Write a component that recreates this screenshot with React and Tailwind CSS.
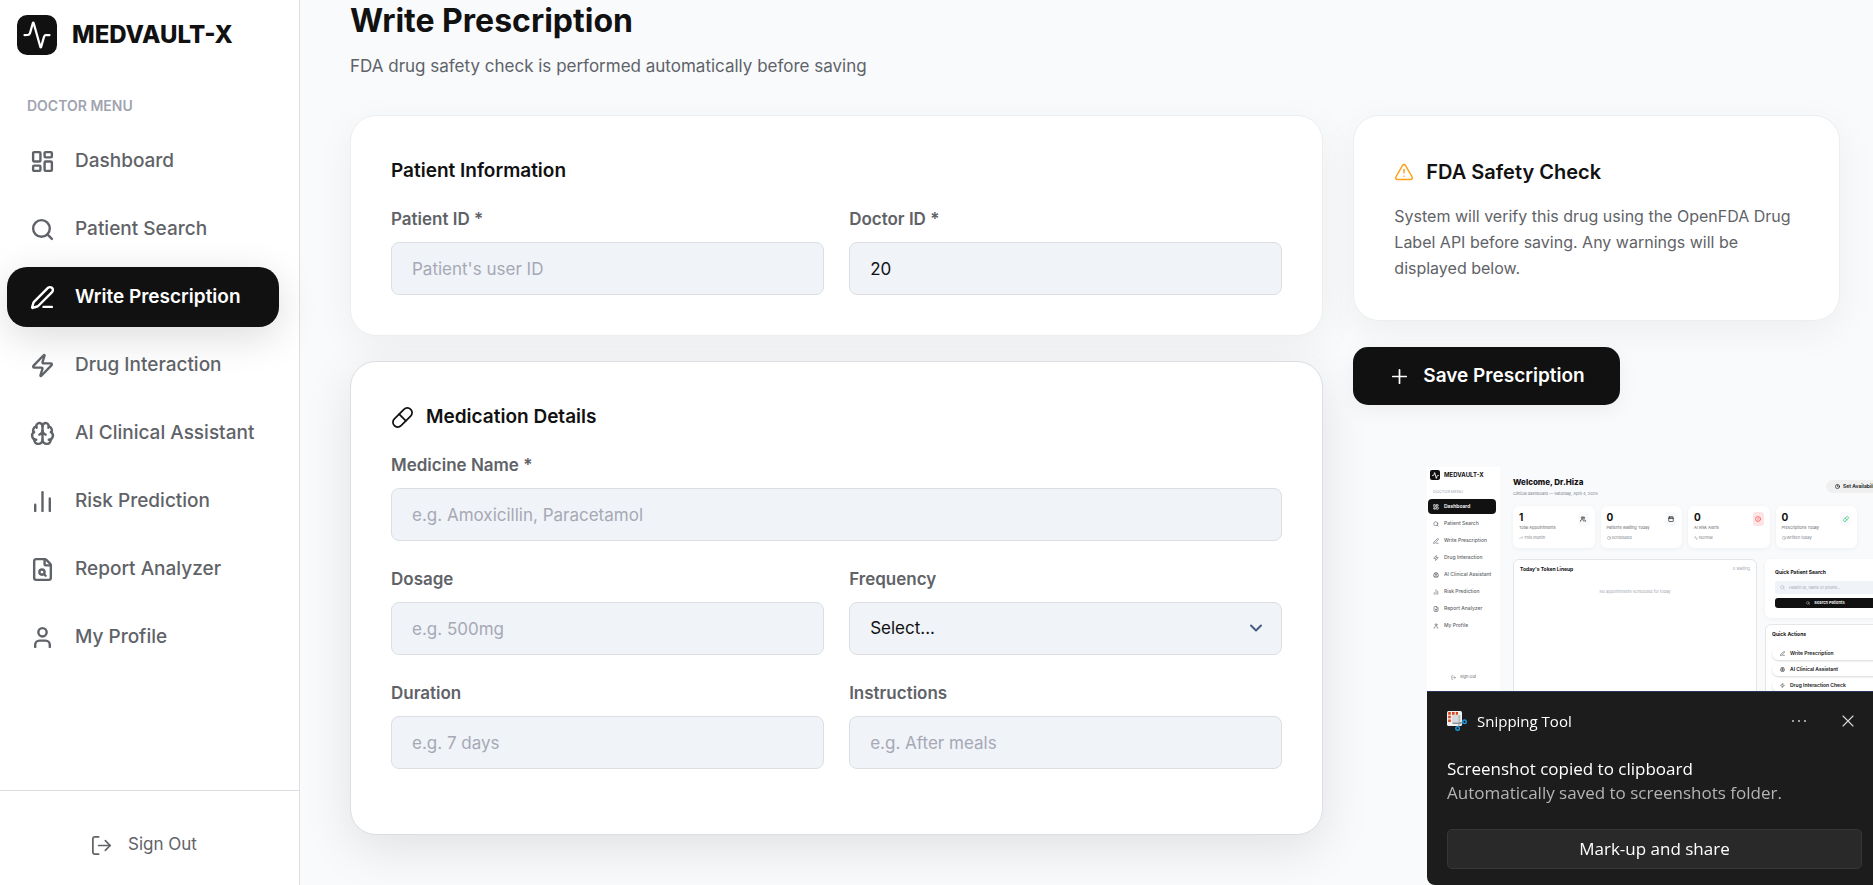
import React, { useState } from "react";
import {
  Activity,
  Brain,
  Calendar,
  ChartNoAxesColumn,
  ChevronDown,
  CircleAlert,
  Clock,
  FileSearch,
  LayoutDashboard,
  LogOut,
  PenLine,
  Pill,
  Plus,
  Search,
  TrendingUp,
  TriangleAlert,
  User,
  Users,
  X,
  Zap,
} from "lucide-react";

const navItems = [
  { label: "Dashboard", icon: LayoutDashboard },
  { label: "Patient Search", icon: Search },
  { label: "Write Prescription", icon: PenLine },
  { label: "Drug Interaction", icon: Zap },
  { label: "AI Clinical Assistant", icon: Brain },
  { label: "Risk Prediction", icon: ChartNoAxesColumn },
  { label: "Report Analyzer", icon: FileSearch },
  { label: "My Profile", icon: User },
];

const inputClass =
  "block w-full h-[53px] px-5 rounded-lg border border-[#dcdee1] bg-[#f0f3f8] text-[17px] text-[#111111] placeholder:text-[#a6a9b5] focus:outline-none";

const Sidebar = () => (
  <aside className="w-[300px] flex-shrink-0 flex flex-col bg-white border-r border-[#dcdee1]">
    <div className="flex items-center gap-[15px] pl-[17px] pt-[15px]">
      <div className="flex items-center justify-center w-10 h-10 rounded-[10px] bg-[#111111]">
        <Activity size={30} strokeWidth={1.8} className="text-white" />
      </div>
      <span className="text-2xl font-extrabold text-[#111111]">MEDVAULT-X</span>
    </div>

    <p className="mt-[41px] pl-[27px] text-sm font-semibold text-[#a0a4b0]">
      DOCTOR MENU
    </p>

    <nav className="mt-[15px] pl-[7px] pr-5 flex flex-col gap-2">
      {navItems.map(({ label, icon: Icon }) => {
        const active = label === "Write Prescription";
        return (
          <a
            key={label}
            href="#"
            className={`flex items-center h-[60px] gap-5 pl-[23px] rounded-[20px] text-[19px] ${
              active
                ? "bg-[#111111] text-white font-semibold shadow-[0_10px_40px_rgba(0,0,0,0.14)]"
                : "text-[#5f6368] font-medium"
            }`}
          >
            <Icon size={25} strokeWidth={2.3} />
            <span>{label}</span>
          </a>
        );
      })}
    </nav>

    <div className="mt-auto border-t border-[#dcdee1] h-[95px] flex justify-center pt-10 pr-3">
      <button className="flex items-center gap-[15px] h-7 text-[17px] text-[#5f6368]">
        <LogOut size={23} strokeWidth={1.8} />
        Sign Out
      </button>
    </div>
  </aside>
);

const Field = ({ id, label, children }) => (
  <div>
    <label htmlFor={id} className="block mb-[11px] text-[17px] leading-6 font-semibold text-[#5f6368]">
      {label}
    </label>
    {children}
  </div>
);

const previewStats = [
  { value: "1", label: "Total Appointments", note: "This month", noteIcon: TrendingUp, icon: Users, tile: "bg-[#f8fafc] text-[#111111]" },
  { value: "0", label: "Patients Waiting Today", note: "Scheduled", noteIcon: Clock, icon: Calendar, tile: "bg-[#f8fafc] text-[#111111]" },
  { value: "0", label: "AI Risk Alerts", note: "Normal", noteIcon: Activity, icon: CircleAlert, tile: "bg-[#fee4e4] text-[#ef4444]" },
  { value: "0", label: "Prescriptions Today", note: "Written today", noteIcon: Clock, icon: Pill, tile: "bg-[#f8fafc] text-[#22c55e]" },
];

const previewActions = [
  { label: "Write Prescription", icon: PenLine },
  { label: "AI Clinical Assistant", icon: Brain },
  { label: "Drug Interaction Check", icon: Zap },
];

// Thumbnail of the captured dashboard shown above the toast text
const CapturePreview = () => (
  <div className="h-[224px] overflow-hidden bg-[#f8fafc]">
    <div className="flex w-[459px] h-[224px]">
      <div className="w-[73px] flex-shrink-0 flex flex-col bg-white">
        <div className="flex items-center gap-1 pl-[3px] pt-[3px]">
          <div className="flex items-center justify-center w-[10px] h-[10px] rounded-[2px] bg-[#111111]">
            <Activity size={7} strokeWidth={3} className="text-white" />
          </div>
          <span className="text-[6px] leading-[10px] font-bold text-[#111111]">MEDVAULT-X</span>
        </div>
        <p className="mt-[9px] pl-[6px] text-[4px] leading-[6px] text-[#a0a4b0]">DOCTOR MENU</p>
        <div className="mt-1 pl-px pr-1 flex flex-col gap-[2px]">
          {navItems.map(({ label, icon: Icon }, index) => (
            <div
              key={label}
              className={`flex items-center h-[15px] gap-[5px] pl-[5px] rounded-[4px] text-[5px] whitespace-nowrap ${
                index === 0 ? "bg-[#111111] text-white font-semibold" : "text-[#5f6368] font-medium"
              }`}
            >
              <Icon size={6} strokeWidth={2.5} className="flex-shrink-0" />
              <span>{label}</span>
            </div>
          ))}
        </div>
        <div className="mt-auto mb-[10px] flex items-center justify-center gap-1 text-[4px] leading-[8px] text-[#5f6368]">
          <LogOut size={5} />
          Sign Out
        </div>
      </div>

      <div className="flex-1 pl-[13px] pt-[10px]">
        <div className="flex items-start justify-between">
          <div>
            <p className="text-[8px] leading-[10px] font-extrabold text-[#111111]">Welcome, Dr.Hiza</p>
            <p className="mt-[3px] text-[4px] leading-[7px] text-[#7b8088]">
              Clinical dashboard — Saturday, April 4, 2026
            </p>
          </div>
          <div className="mt-[3px] flex items-center gap-[3px] h-[13px] w-[60px] pl-[9px] rounded-full bg-[#f0f0f0] text-[5px] font-semibold text-[#111111] whitespace-nowrap">
            <Clock size={5} strokeWidth={3} />
            Set Availability
          </div>
        </div>

        <div className="mt-[9px] grid grid-cols-4 gap-[6px] w-[344px]">
          {previewStats.map(({ value, label, note, noteIcon: NoteIcon, icon: Icon, tile }) => (
            <div key={label} className="h-[42px] px-[6px] pt-[6px] rounded-[6px] bg-white shadow-[0_1px_4px_rgba(0,0,0,0.05)]">
              <div className="flex justify-between h-[12px]">
                <span className="text-[10px] leading-[10px] font-bold text-[#111111]">{value}</span>
                <span className={`flex items-center justify-center w-[11px] h-[14px] rounded-[3px] ${tile}`}>
                  <Icon size={6} strokeWidth={2.5} />
                </span>
              </div>
              <p className="text-[4px] leading-[7px] text-[#5f6368] whitespace-nowrap">{label}</p>
              <p className="mt-1 flex items-center gap-px text-[4px] leading-[6px] text-[#7b8088]">
                <NoteIcon size={4} />
                {note}
              </p>
            </div>
          ))}
        </div>

        <div className="mt-[11px] flex gap-2">
          <div className="w-[244px] h-[140px] px-[6px] pt-[6px] rounded-[6px] border border-[#e4e6e9] bg-white">
            <div className="flex justify-between leading-[6px]">
              <span className="text-[5px] font-bold text-[#111111]">Today's Token Lineup</span>
              <span className="text-[4px] text-[#a0a4b0]">0 waiting</span>
            </div>
            <p className="mt-4 text-center text-[4px] leading-[7px] text-[#a0a4b0]">
              No appointments scheduled for today
            </p>
          </div>
          <div className="w-[121px] flex flex-col gap-[6px]">
            <div className="h-[59px] px-[10px] pt-[10px] rounded-[6px] bg-white shadow-[0_1px_4px_rgba(0,0,0,0.05)]">
              <p className="text-[5px] leading-[7px] font-bold text-[#111111]">Quick Patient Search</p>
              <div className="mt-[5px] flex items-center gap-1 h-[13px] px-[5px] rounded-[2px] bg-[#f0f3f8] text-[4px] text-[#a0a4b0]">
                <Search size={5} />
                Health ID, name or phone...
              </div>
              <div className="mt-1 flex items-center justify-center gap-1 h-[10px] rounded-[3px] bg-[#111111] text-[4px] font-semibold text-white">
                <Search size={4} />
                Search Patients
              </div>
            </div>
            <div className="h-[90px] px-[6px] pt-[6px] rounded-[6px] border border-[#e4e6e9] bg-white">
              <p className="text-[5px] leading-[7px] font-bold text-[#111111]">Quick Actions</p>
              <div className="mt-[9px] flex flex-col gap-[3px]">
                {previewActions.map(({ label, icon: Icon }) => (
                  <div
                    key={label}
                    className="flex items-center gap-[5px] h-[13px] pl-2 rounded-[7px] bg-white shadow-[0_1px_2px_rgba(0,0,0,0.16)] text-[5px] font-semibold text-[#111111]"
                  >
                    <Icon size={5} />
                    {label}
                  </div>
                ))}
              </div>
            </div>
          </div>
        </div>
      </div>
    </div>
  </div>
);

const SnippingToolIcon = () => (
  <svg width="20" height="20" viewBox="0 0 20 20" fill="none" aria-hidden="true">
    <rect x="0" y="0" width="15" height="15" rx="1.5" fill="#f1f1f1" />
    <rect x="5" y="4" width="7" height="7.5" fill="#d9dadc" />
    <path d="M1.2 2.4h2.6M5 2.4h2.6M8.8 2.4h2.2" stroke="#d9431a" strokeWidth="2.6" />
    <path d="M2.5 4.8v2.4M2.5 8.4v2.6" stroke="#d9431a" strokeWidth="2.6" />
    <path d="M12.4 4v8.5l-1.2 3" stroke="#b4b8bd" strokeWidth="1.8" />
    <path d="M5.5 12.3h7.5l3-1.2" stroke="#8c9197" strokeWidth="1.6" />
    <circle cx="17.5" cy="10.8" r="1.8" stroke="#1a9be0" strokeWidth="1.4" />
    <circle cx="10.6" cy="17.4" r="1.8" stroke="#1a9be0" strokeWidth="1.4" />
  </svg>
);

const SnipToast = () => (
  <div className="fixed right-0 bottom-0 w-[446px] font-['Open_Sans',sans-serif]">
    <div className="font-['Inter',sans-serif]">
      <CapturePreview />
    </div>
    <div className="h-[194px] pl-5 pr-[11px] pt-[17px] rounded-bl-lg border-t border-[#26365c] bg-[#1c1c1c]">
      <div className="flex items-center h-6">
        <SnippingToolIcon />
        <span className="ml-[10px] text-[15px] text-white">Snipping Tool</span>
        <button aria-label="More options" className="ml-auto flex gap-1 p-1">
          <span className="w-[2px] h-[2px] rounded-full bg-[#c8c8c8]" />
          <span className="w-[2px] h-[2px] rounded-full bg-[#c8c8c8]" />
          <span className="w-[2px] h-[2px] rounded-full bg-[#c8c8c8]" />
        </button>
        <button aria-label="Close" className="ml-7 mr-1">
          <X size={20} strokeWidth={1.4} className="text-[#d4d4d4]" />
        </button>
      </div>
      <p className="mt-6 text-[17px] leading-6 text-white">Screenshot copied to clipboard</p>
      <p className="text-[17px] leading-6 text-[#b4b4b4]">Automatically saved to screenshots folder.</p>
      <button className="mt-6 w-full h-10 rounded-[5px] border border-[#373737] bg-[#292929] text-[17px] text-white">
        Mark-up and share
      </button>
    </div>
  </div>
);

const App = () => {
  const [form, setForm] = useState({
    patientId: "",
    doctorId: "20",
    medicine: "",
    dosage: "",
    frequency: "",
    duration: "",
    instructions: "",
  });

  const bind = (name) => ({
    id: name,
    value: form[name],
    onChange: (e) => setForm({ ...form, [name]: e.target.value }),
  });

  return (
    <div className="flex h-screen overflow-hidden bg-[#f8fafc] font-['Inter',sans-serif]">
      <Sidebar />

      <main className="flex-1 min-w-0 overflow-hidden pt-px pl-[50px] pr-[33px]">
        <h1 className="text-[32px] leading-10 font-bold text-[#111111]">Write Prescription</h1>
        <p className="mt-[11px] text-[17px] leading-7 text-[#5f6368]">
          FDA drug safety check is performed automatically before saving
        </p>

        <div className="mt-[35px] grid grid-cols-[2fr_1fr] gap-[30px] items-start">
          <div className="flex flex-col gap-[25px]">
            {/* Patient */}
            <section className="p-10 rounded-[26px] border border-[#eceef0] bg-white shadow-[0_10px_40px_rgba(0,0,0,0.05)]">
              <h2 className="mb-[21px] text-[19px] leading-[30px] font-semibold text-[#111111]">
                Patient Information
              </h2>
              <div className="grid grid-cols-2 gap-[25px]">
                <Field id="patientId" label="Patient ID *">
                  <input type="text" placeholder="Patient's user ID" className={inputClass} {...bind("patientId")} />
                </Field>
                <Field id="doctorId" label="Doctor ID *">
                  <input type="text" className={inputClass} {...bind("doctorId")} />
                </Field>
              </div>
            </section>

            {/* Medication */}
            <section className="px-10 pt-10 pb-[65px] rounded-[26px] border border-[#dcdee1] bg-white shadow-[0_14px_50px_rgba(0,0,0,0.1)]">
              <h2 className="mb-[21px] flex items-center gap-3 text-[19px] leading-[30px] font-semibold text-[#111111]">
                <Pill size={23} strokeWidth={1.8} />
                Medication Details
              </h2>
              <div className="grid grid-cols-2 gap-x-[25px] gap-y-[26px]">
                <div className="col-span-2">
                  <Field id="medicine" label="Medicine Name *">
                    <input type="text" placeholder="e.g. Amoxicillin, Paracetamol" className={inputClass} {...bind("medicine")} />
                  </Field>
                </div>
                <Field id="dosage" label="Dosage">
                  <input type="text" placeholder="e.g. 500mg" className={inputClass} {...bind("dosage")} />
                </Field>
                <Field id="frequency" label="Frequency">
                  <div className="relative">
                    <select className={`${inputClass} appearance-none`} {...bind("frequency")}>
                      <option value="">Select...</option>
                      <option value="once">Once daily</option>
                      <option value="twice">Twice daily</option>
                      <option value="thrice">Three times daily</option>
                    </select>
                    <ChevronDown
                      size={20}
                      strokeWidth={2.5}
                      className="absolute right-4 top-4 text-[#475f82] pointer-events-none"
                    />
                  </div>
                </Field>
                <Field id="duration" label="Duration">
                  <input type="text" placeholder="e.g. 7 days" className={inputClass} {...bind("duration")} />
                </Field>
                <Field id="instructions" label="Instructions">
                  <input type="text" placeholder="e.g. After meals" className={inputClass} {...bind("instructions")} />
                </Field>
              </div>
            </section>
          </div>

          <div className="flex flex-col items-start gap-[26px]">
            <section className="w-full px-10 pt-10 pb-[39px] rounded-[26px] border border-[#eceef0] bg-white shadow-[0_10px_40px_rgba(0,0,0,0.05)]">
              <h2 className="mb-[15px] flex items-center gap-3 text-xl leading-8 font-semibold text-[#111111]">
                <TriangleAlert size={20} strokeWidth={1.8} className="text-[#ff9f1a]" />
                FDA Safety Check
              </h2>
              <p className="text-base leading-[26px] text-[#5f6368]">
                System will verify this drug using the OpenFDA Drug Label API before saving. Any warnings will be
                displayed below.
              </p>
            </section>

            <button className="flex items-center gap-3 h-[58px] px-[35px] rounded-[15px] bg-[#111111] text-[19px] font-semibold text-white shadow-[0_6px_20px_rgba(0,0,0,0.05)]">
              <Plus size={23} strokeWidth={1.8} />
              Save Prescription
            </button>
          </div>
        </div>
      </main>

      <SnipToast />
    </div>
  );
};

export default App;
